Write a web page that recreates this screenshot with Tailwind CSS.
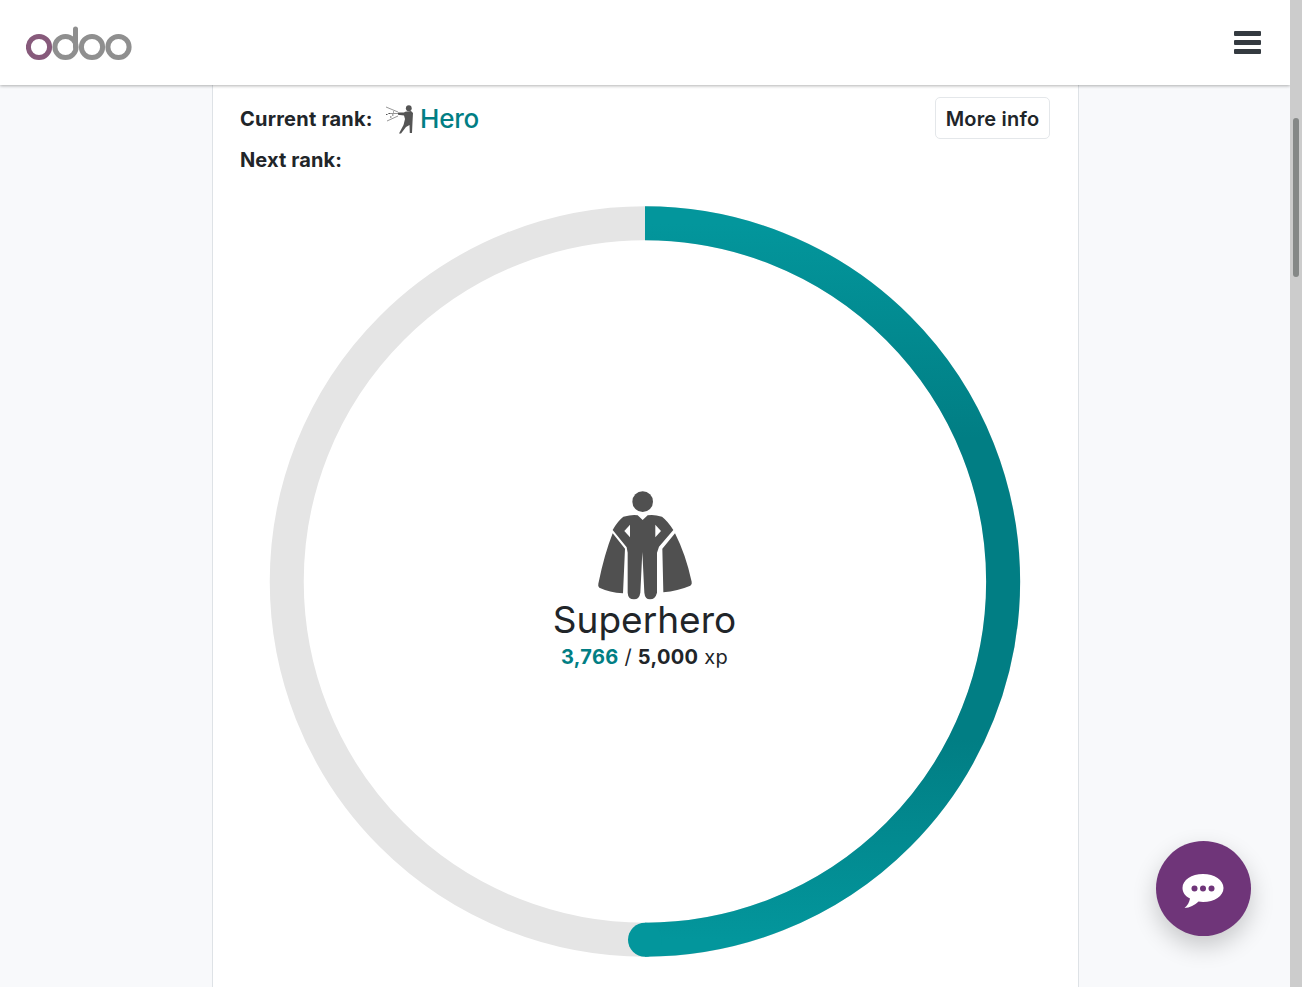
<!DOCTYPE html>
<html lang="en">
<head>
    <meta charset="UTF-8">
    <meta name="viewport" content="width=device-width, initial-scale=1.0">
    <title>Rank</title>
    <script src="https://cdn.jsdelivr.net/npm/@tailwindcss/browser@4"></script>
</head>
<body class="overflow-hidden font-['Inter',sans-serif] text-[#212529]">
<div class="flex h-[987px] w-[1302px] overflow-hidden">
    <div class="relative w-[1290px] h-full bg-[#f8f9fb] overflow-hidden">

        <!-- Navbar -->
        <header class="relative z-10 h-[85px] bg-white shadow-[0_1px_3px_rgba(0,0,0,0.3)] flex items-center justify-between pl-[26px] pr-[29px]">
            <svg width="106" height="36" viewBox="26 26 106 36" class="mt-[2px]">
                <circle cx="39" cy="47" r="10.6" fill="none" stroke="#875a7b" stroke-width="5"/>
                <circle cx="65.5" cy="47" r="10.6" fill="none" stroke="#8f8f8f" stroke-width="5"/>
                <path d="M75.5 47V29" fill="none" stroke="#8f8f8f" stroke-width="5" stroke-linecap="round"/>
                <circle cx="92" cy="47" r="10.6" fill="none" stroke="#8f8f8f" stroke-width="5"/>
                <circle cx="118.5" cy="47" r="10.6" fill="none" stroke="#8f8f8f" stroke-width="5"/>
            </svg>
            <div class="flex flex-col gap-[4.5px] w-[27px]">
                <span class="h-[4.5px] bg-[#343a40] rounded-[1px]"></span>
                <span class="h-[4.5px] bg-[#343a40] rounded-[1px]"></span>
                <span class="h-[4.5px] bg-[#343a40] rounded-[1px]"></span>
            </div>
        </header>

        <!-- Card -->
        <main class="ml-[212px] w-[867px] h-[902px] bg-white border-x border-[#dee2e6] pl-[27px] pr-[28px]">
            <div class="flex justify-between items-start pt-[12px]">
                <div>
                    <div class="flex items-center h-[44px]">
                        <span class="text-[20px] font-bold w-[145px] tracking-[0.22px]">Current rank:</span>
                        <svg width="30" height="30" viewBox="5 5 30 30" class="mr-[5px] -mt-[1px]">
                            <circle cx="28.8" cy="9.2" r="2.9" fill="#555"/>
                            <path d="M18 13.500L24 13.500Q26 12 31 12L33 14 32.500 23 32 34H29.800L29.500 26 26 28 21 34.500H19L23.500 26 25 20 24 16.500 18 15.800Z" fill="#555"/>
                            <path d="M6 8l12 5M8 14.500h10M7 22l11-5" stroke="#6a6a6a" stroke-width=".7" fill="none"/>
                            <path d="M6 15.500h1.500M9 14.500h1M12 16h1.500M10 18h1.500M13 13h1" stroke="#555" stroke-width="1.200" fill="none"/>
                        </svg>
                        <span class="text-[26px] leading-[30px] font-medium text-[#017e84] tracking-[-0.2px]">Hero</span>
                    </div>
                    <div class="text-[20px] font-bold mt-[4px] tracking-[0.1px]">Next rank:</div>
                </div>
                <button class="h-[42px] w-[115px] bg-white border border-[#e4e7ea] rounded-[5px] pt-[2px] text-[20px] font-semibold tracking-[0.2px]">More info</button>
            </div>

            <!-- Progress ring -->
            <div class="grid place-items-center w-[809px] mt-[30px]">
                <svg width="752" height="752" viewBox="0 0 752 752" class="[grid-area:1/1]">
                    <defs>
                        <linearGradient id="ringGrad" x1="0" y1="0" x2="0" y2="1">
                            <stop offset="0" stop-color="#03969c"/>
                            <stop offset="0.3" stop-color="#017e84"/>
                            <stop offset="0.72" stop-color="#017e84"/>
                            <stop offset="1" stop-color="#03969c"/>
                        </linearGradient>
                    </defs>
                    <circle cx="376" cy="376.5" r="358.25" fill="none" stroke="#e5e5e5" stroke-width="34"/>
                    <path d="M376 18.25A358.25 358.25 0 0 1 376 734.75" fill="none" stroke="url(#ringGrad)" stroke-width="34"/>
                    <circle cx="376" cy="734.75" r="17" fill="#03969c"/>
                </svg>
                <div class="[grid-area:1/1] flex flex-col items-center -mt-[5px]">
                    <svg width="110" height="115" viewBox="0 0 330 345">
                        <circle cx="158" cy="47" r="31" fill="#505050"/>
                        <path d="M100 92Q130 84 143 88L158 102 173 88Q190 84 216 92Q234 106 250 132L207 182 201 200V320Q196 340 180 340 165 340 163 320L157 198 151 320Q148 340 132 340 114 340 113 320V200L110 184 68 132Q82 106 100 92Z" fill="#505050"/>
                        <path d="M120 116L103 135 120 154Z" fill="#fff"/>
                        <path d="M196 116L213 135 196 154Z" fill="#fff"/>
                        <path d="M68 142L105 188 99 322Q58 319 28 305 23 301 25 293 43 205 68 142Z" fill="#505050"/>
                        <path d="M255 142L217 188 220 319Q263 315 301 299 307 295 305 287 287 205 255 142Z" fill="#505050"/>
                    </svg>
                    <div class="text-[37px] leading-[44px] -mt-[3px]">Superhero</div>
                    <div class="text-[20px] leading-[28px] tracking-[0.3px] mt-[1px]"><span class="font-bold text-[#017e84]">3,766</span> / <span class="font-bold">5,000</span> xp</div>
                </div>
            </div>
        </main>

        <!-- Chat button -->
        <div class="absolute left-[1156px] top-[841px] w-[95px] h-[95px] rounded-full bg-[#6f3579] shadow-[0_10px_25px_rgba(0,0,0,0.2)] flex items-center justify-center">
            <svg width="42" height="35" viewBox="0 0 42 35" class="mt-[5px] -ml-[1px]">
                <path d="M21 0C32.500 0 41.500 6 41.500 14S32.500 28 21 28C19.500 28 18 27.900 16.500 27.600 13 31 7.500 34 2.500 34 5.500 31.500 7.500 28 8 24.500 3 22 .5 18.300.5 14 .5 6 9.500 0 21 0Z" fill="#fff"/>
                <circle cx="12.500" cy="14.500" r="3" fill="#6f3579"/>
                <circle cx="21" cy="14.500" r="3" fill="#6f3579"/>
                <circle cx="29.500" cy="14.500" r="3" fill="#6f3579"/>
            </svg>
        </div>
    </div>

    <!-- Scrollbar -->
    <div class="w-[12px] h-full bg-[#cccccc] pt-[118px] pl-[3px]">
        <div class="w-[6px] h-[159px] rounded-[3px] bg-[#858887]"></div>
    </div>
</div>
</body>
</html>
